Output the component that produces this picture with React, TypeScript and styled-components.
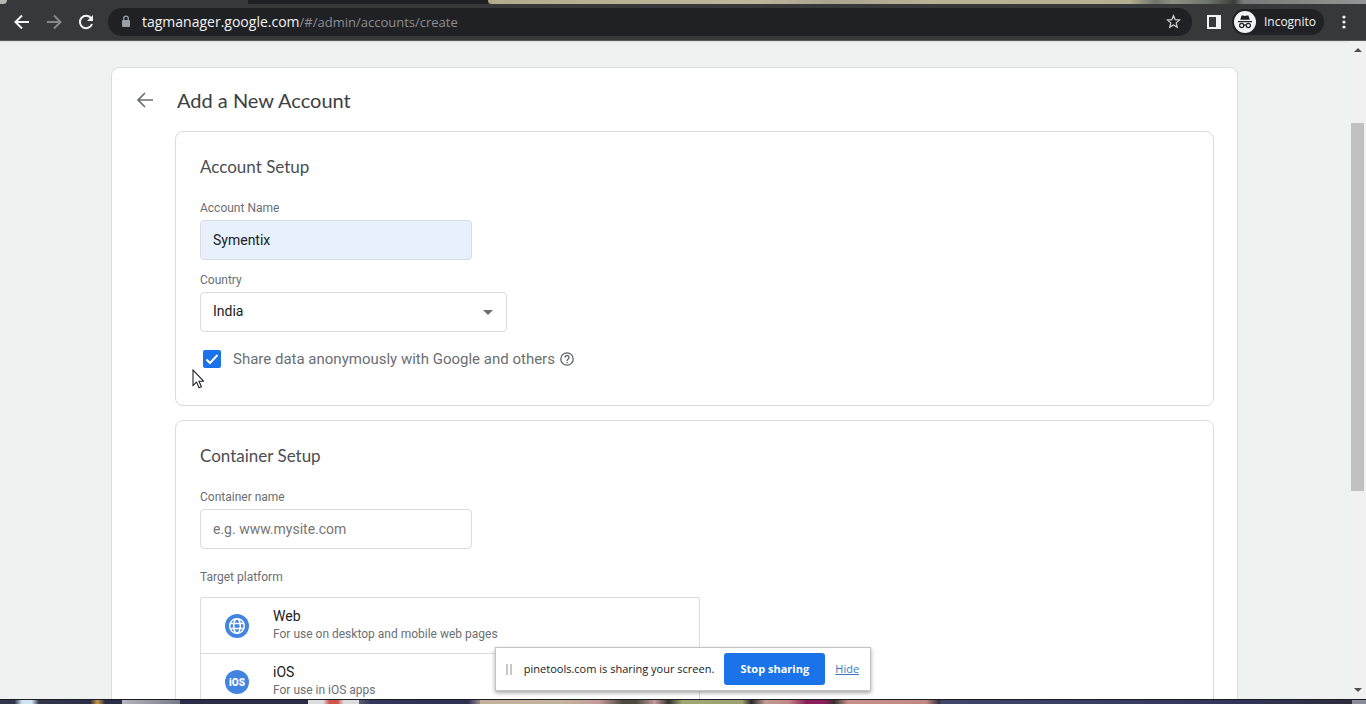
import React from "react";
import styled, { createGlobalStyle } from "styled-components";

const Global = createGlobalStyle`
  *, *::before, *::after { box-sizing: border-box; }
  body { margin: 0; font-family: Roboto, sans-serif; color: #202124; overflow: hidden; }
  button, input, select { font: inherit; color: inherit; margin: 0; }
  svg { display: block; flex: none; }
`;

const Screen = styled.div`
  display: flex;
  flex-direction: column;
  height: 100vh;
  position: relative;
  overflow: hidden;
`;

const TabStrip = styled.div`
  flex: none;
  height: 4px;
  display: flex;
  background: #37383a;
`;

const StripPiece = styled.div<{ $grow: number; $bg: string; $radius?: string }>`
  flex: ${(p) => p.$grow} 0 0;
  background: ${(p) => p.$bg};
  border-radius: ${(p) => p.$radius ?? "0"};
`;

const Toolbar = styled.header`
  flex: none;
  display: flex;
  align-items: center;
  height: 37px;
  padding: 0 10px 1px 8px;
  background: #37383a;
  border-bottom: 1px solid #58595b;
  color: #f1f3f4;
`;

const ToolButton = styled.button<{ $dim?: boolean }>`
  display: flex;
  align-items: center;
  justify-content: center;
  flex: none;
  width: 28px;
  height: 28px;
  padding: 0;
  border: 0;
  background: none;
  color: ${(p) => (p.$dim ? "#85878a" : "#f1f3f4")};
`;

const SidePanelButton = styled(ToolButton)`
  width: 40px;
  padding-left: 4px;
`;

const MenuButton = styled(ToolButton)`
  width: 24px;
`;

const NavButtons = styled.nav`
  display: flex;
  gap: 4px;
  margin-right: 8px;
`;

const AddressBar = styled.div`
  flex: 1;
  display: flex;
  align-items: center;
  height: 28px;
  padding: 0 4px 0 12px;
  border-radius: 14px;
  background: #202124;
  font: 13px/20px "Open Sans", "Noto Sans", sans-serif;
`;

const Url = styled.span`
  flex: 1;
  margin-left: 10px;
  color: #8b8e91;
  b { font-weight: 400; font-size: 14px; color: #f1f3f4; }
`;

const Incognito = styled.button`
  display: flex;
  align-items: center;
  gap: 8px;
  height: 26px;
  margin-right: 8px;
  padding: 0 8px 0 2px;
  border: 0;
  border-radius: 13px;
  background: #202124;
  color: #f1f3f4;
  font: 12px/16px "Open Sans", "Noto Sans", sans-serif;
`;

const Body = styled.div`
  flex: 1;
  min-height: 0;
  display: flex;
  background: #f0f2f1;
`;

const Page = styled.main`
  flex: 1;
  min-width: 0;
  overflow: hidden;
  padding: 26px 111px 0;
  box-shadow: inset 0 3px 3px -2px #dcdfde;
`;

const Card = styled.section`
  padding: 0 23px 24px;
  border: 1px solid #dadde0;
  border-radius: 8px;
  background: #fff;
`;

const CardHead = styled.div`
  display: flex;
  align-items: center;
  gap: 22px;
  height: 63px;
`;

const BackButton = styled(ToolButton)`
  width: 20px;
  color: #6b6f73;
`;

const Title = styled.h1`
  margin: 0;
  font: 400 20px/28px "Lato", sans-serif;
  color: #3c4043;
`;

const Panel = styled.section`
  margin: 0 0 14px 40px;
  padding: 24px 24px 29px;
  border: 1px solid #dadde0;
  border-radius: 8px;
`;

const PanelTitle = styled.h2`
  margin: 0 0 20px;
  font: 400 17px/22px "Lato", sans-serif;
  color: #4a4e52;
`;

const Field = styled.div`
  display: flex;
  flex-direction: column;
  align-items: flex-start;
  margin-bottom: 10px;
`;

const Label = styled.label`
  margin-bottom: 2px;
  font-size: 12px;
  line-height: 20px;
  color: #6b6f73;
`;

const GroupLabel = styled.div`
  margin: 18px 0 10px;
  font-size: 12px;
  line-height: 20px;
  color: #6b6f73;
`;

const TextInput = styled.input<{ $filled?: boolean }>`
  width: 272px;
  height: 40px;
  padding: 0 12px;
  border: 1px solid #dadce0;
  border-radius: 4px;
  background: ${(p) => (p.$filled ? "#e7f0fd" : "#fff")};
  font-size: 14px;
  outline: 0;
  &::placeholder { color: #757575; opacity: 1; }
`;

const SelectBox = styled.div`
  display: grid;
  width: 307px;
  align-items: center;
  > * { grid-area: 1 / 1; }
  > svg { justify-self: end; margin-right: 14px; pointer-events: none; }
`;

const Select = styled.select`
  appearance: none;
  width: 100%;
  height: 40px;
  padding: 0 12px 2px;
  border: 1px solid #dadce0;
  border-radius: 4px;
  background: #fff;
  font-size: 14px;
`;

const CheckRow = styled.div`
  display: flex;
  align-items: center;
  height: 34px;
  padding-left: 3px;
`;

const CheckLabel = styled.label`
  display: flex;
  align-items: center;
  gap: 12px;
  margin-right: 4px;
  font-size: 15px;
  line-height: 20px;
  color: #6b6f73;
`;

const CheckBox = styled.span`
  display: grid;
  place-items: center;
  > * { grid-area: 1 / 1; }
  > svg { pointer-events: none; }
`;

const CheckInput = styled.input`
  appearance: none;
  width: 18px;
  height: 18px;
  border-radius: 2px;
  border: 2px solid #5f6368;
  &:checked { background: #1a73e8; border-color: #1a73e8; }
`;

const HelpButton = styled(ToolButton)`
  width: 16px;
  height: 20px;
  color: #5f6368;
`;

const Platforms = styled.ul`
  max-width: 500px;
  margin: 0;
  padding: 0;
  list-style: none;
  border: 1px solid #dadce0;
  border-radius: 2px;
`;

const PlatformItem = styled.li`
  & + & { border-top: 1px solid #dadce0; }
`;

const PlatformButton = styled.button`
  display: flex;
  align-items: center;
  gap: 24px;
  width: 100%;
  height: 55px;
  padding: 0 24px;
  border: 0;
  background: none;
  text-align: left;
`;

const PlatformText = styled.span`
  display: flex;
  flex-direction: column;
  padding-bottom: 4px;
  font-size: 12px;
  line-height: 16px;
  color: #6b6f73;
  b { font-weight: 400; font-size: 14px; line-height: 20px; color: #202124; }
`;

const Scrollbar = styled.div`
  flex: none;
  width: 17px;
  padding: 5px 2px;
  display: flex;
  flex-direction: column;
  align-items: center;
  background: #f1f1f1;
`;

const Gap = styled.div<{ $grow: number }>`
  flex: ${(p) => p.$grow} 0 0;
`;

const Thumb = styled(Gap)`
  width: 100%;
  background: #c1c1c1;
`;

const Taskbar = styled.footer`
  flex: none;
  display: flex;
  height: 5px;
  border-top: 1px solid #1c1c24;
  background: #34364e;
`;

const ShareLayer = styled.div`
  position: absolute;
  inset: auto 0 13px;
  display: flex;
  justify-content: center;
  pointer-events: none;
`;

const ShareBar = styled.aside`
  display: flex;
  align-items: center;
  gap: 10px;
  height: 44px;
  padding: 0 11px 0 10px;
  border: 1px solid #c4c4c4;
  background: #fff;
  box-shadow: 0 2px 4px rgba(0, 0, 0, 0.35);
  font: 11px/16px "Open Sans", "Noto Sans", sans-serif;
  pointer-events: auto;
`;

const Grip = styled.span`
  width: 6px;
  height: 11px;
  margin-right: 2px;
  border: solid #c6c6c6;
  border-width: 0 2px;
`;

const StopButton = styled.button`
  width: 101px;
  height: 32px;
  padding: 0;
  border: 0;
  border-radius: 3px;
  background: #1a73e8;
  color: #fff;
  font-weight: 700;
`;

const HideLink = styled.a`
  color: #3c78c0;
`;

const Pointer = styled.svg`
  position: absolute;
  left: 192px;
  top: 369px;
`;

const Arrow = ({ flip = false }: { flip?: boolean }) => (
  <svg width="16" height="16" viewBox="0 0 16 16" fill="none" stroke="currentColor" strokeWidth="2">
    <path d={flip ? "M1 8h13M8 1.5 14.5 8 8 14.5" : "M15 8H2M8 1.5 1.5 8 8 14.5"} />
  </svg>
);

export default function App() {
  return (
    <>
      <Global />
      <Screen>
        <TabStrip>
          <StripPiece $grow={7} $bg="#b5b6b4" $radius="0 0 6px 0" />
          <StripPiece $grow={241} $bg="#37383a" />
          <StripPiece $grow={240} $bg="#202124" />
          <StripPiece $grow={878} $bg="linear-gradient(90deg,#b3ad8c,#bdb79a 30%,#a9a58f 39%,#b9b394 50%,#b5b08f 73%,#6f746c 76%,#8e9082 78%,#6f746f 82%,#3c3c38 85%,#777a78 86%,#949594)" $radius="0 0 0 5px" />
        </TabStrip>
        <Toolbar>
          <NavButtons aria-label="History">
            <ToolButton aria-label="Back"><Arrow /></ToolButton>
            <ToolButton aria-label="Forward" $dim><Arrow flip /></ToolButton>
            <ToolButton aria-label="Reload">
              <svg width="16" height="16" viewBox="0 0 16 16" fill="none" stroke="currentColor" strokeWidth="2">
                <path d="M13.2 4.4A6.2 6.2 0 1 0 14 10" />
                <path d="M15 1v6H9z" fill="currentColor" stroke="none" />
              </svg>
            </ToolButton>
          </NavButtons>
          <AddressBar>
            <svg width="12" height="14" viewBox="0 0 12 14" fill="none">
              <rect x="2" y="5" width="8" height="7" rx="1" fill="#9aa0a6" />
              <path d="M3.7 5V3.4a2.3 2.3 0 0 1 4.6 0V5" stroke="#9aa0a6" strokeWidth="1.3" />
            </svg>
            <Url><b>tagmanager.google.com</b>/#/admin/accounts/create</Url>
            <ToolButton aria-label="Bookmark this page">
              <svg width="15" height="15" viewBox="0 0 16 16" fill="none" stroke="#d0d3d6" strokeWidth="1.3">
                <path d="m8 1.8 1.8 4.3 4.6.4-3.5 3 1.1 4.5L8 11.6 4 14l1.1-4.5-3.5-3 4.6-.4z" />
              </svg>
            </ToolButton>
          </AddressBar>
          <SidePanelButton aria-label="Side panel">
            <svg width="14" height="14" viewBox="0 0 14 14">
              <path fill="currentColor" fillRule="evenodd" d="M0 0h14v14H0zM2 2v10h7V2z" />
            </svg>
          </SidePanelButton>
          <Incognito>
            <svg width="22" height="22" viewBox="0 0 22 22">
              <circle cx="11" cy="11" r="11" fill="#f1f3f4" />
              <path fill="#202124" d="M7.6 4.5h1.7L11 5l1.7-.5h1.7l1.4 4.2H6.2zM4 10h14v1.2H4z" />
              <g fill="none" stroke="#202124" strokeWidth="1.2">
                <circle cx="7.7" cy="14.5" r="2.1" />
                <circle cx="14.3" cy="14.5" r="2.1" />
                <path d="M9.8 14.2q1.2-.7 2.4 0" />
              </g>
            </svg>
            Incognito
          </Incognito>
          <MenuButton aria-label="Menu">
            <svg width="4" height="14" viewBox="0 0 4 14" fill="currentColor">
              <circle cx="2" cy="2" r="1.6" /><circle cx="2" cy="7" r="1.6" /><circle cx="2" cy="12" r="1.6" />
            </svg>
          </MenuButton>
        </Toolbar>

        <Body>
          <Page>
            <Card>
              <CardHead>
                <BackButton aria-label="Go back">
                  <svg width="18" height="16" viewBox="0 0 18 16" fill="none" stroke="currentColor" strokeWidth="1.7">
                    <path d="M17 8H2.5M9 1 2 8l7 7" />
                  </svg>
                </BackButton>
                <Title>Add a New Account</Title>
              </CardHead>

              <Panel>
                <PanelTitle>Account Setup</PanelTitle>
                <Field>
                  <Label htmlFor="account">Account Name</Label>
                  <TextInput id="account" $filled defaultValue="Symentix" />
                </Field>
                <Field>
                  <Label htmlFor="country">Country</Label>
                  <SelectBox>
                    <Select id="country" defaultValue="India"><option>India</option></Select>
                    <svg width="10" height="5" viewBox="0 0 10 5"><path d="M0 0h10L5 5z" fill="#6b6f73" /></svg>
                  </SelectBox>
                </Field>
                <CheckRow>
                  <CheckLabel>
                    <CheckBox>
                      <CheckInput type="checkbox" defaultChecked />
                      <svg width="18" height="18" viewBox="0 0 18 18" fill="none" stroke="#fff" strokeWidth="2">
                        <path d="m3.5 9.5 3.5 3.5 7.5-8" />
                      </svg>
                    </CheckBox>
                    Share data anonymously with Google and others
                  </CheckLabel>
                  <HelpButton aria-label="Help">
                    <svg width="14" height="14" viewBox="0 0 14 14" fill="none" stroke="currentColor" strokeWidth="1.3">
                      <circle cx="7" cy="7" r="6.2" />
                      <path d="M5 5.6a2 2 0 1 1 3.2 1.5C7.4 7.700 7 8 7 8.900M7 9.900v1.300" />
                    </svg>
                  </HelpButton>
                </CheckRow>
              </Panel>

              <Panel>
                <PanelTitle>Container Setup</PanelTitle>
                <Field>
                  <Label htmlFor="container">Container name</Label>
                  <TextInput id="container" placeholder="e.g. www.mysite.com" />
                </Field>
                <GroupLabel>Target platform</GroupLabel>
                <Platforms>
                  <PlatformItem>
                    <PlatformButton>
                      <svg width="24" height="24" viewBox="0 0 24 24">
                        <circle cx="12" cy="12" r="12" fill="#4285e0" />
                        <g fill="none" stroke="#fff" strokeWidth="1.5">
                          <circle cx="12" cy="12" r="7.3" />
                          <ellipse cx="12" cy="12" rx="3.3" ry="7.3" />
                          <path d="M5.2 9.5h13.6M5.2 14.5h13.6" />
                        </g>
                      </svg>
                      <PlatformText><b>Web</b>For use on desktop and mobile web pages</PlatformText>
                    </PlatformButton>
                  </PlatformItem>
                  <PlatformItem>
                    <PlatformButton>
                      <svg width="24" height="24" viewBox="0 0 24 24">
                        <circle cx="12" cy="12" r="12" fill="#4285e0" />
                        <text x="12" y="16" textAnchor="middle" fontFamily="Roboto, sans-serif" fontSize="10" fontWeight="900" fill="#fff">iOS</text>
                      </svg>
                      <PlatformText><b>iOS</b>For use in iOS apps</PlatformText>
                    </PlatformButton>
                  </PlatformItem>
                </Platforms>
              </Panel>
            </Card>
          </Page>
          <Scrollbar aria-hidden="true">
            <svg width="8" height="8" viewBox="0 0 8 8"><path d="M0 6h8L4 2z" fill="#505050" /></svg>
            <Gap $grow={69} />
            <Thumb $grow={368} />
            <Gap $grow={195} />
            <svg width="8" height="8" viewBox="0 0 8 8"><path d="M0 2h8L4 6z" fill="#505050" /></svg>
          </Scrollbar>
        </Body>

        <Taskbar>
          <StripPiece $grow={122} $bg="linear-gradient(90deg,#34364e 12%,#cfe6f2 18%,#cfe6f2 26%,#34364e 32%,#2c2e48 74%,#c79a40 80%,#2c2e48 86%)" />
          <StripPiece $grow={58} $bg="linear-gradient(90deg,#b5b6bb,#77798a)" />
          <StripPiece $grow={128} $bg="#2c2c48" />
          <StripPiece $grow={51} $bg="linear-gradient(90deg,#dcdcde 30%,#cf5347 42%,#cf5347 58%,#dcdcde 70%)" />
          <StripPiece $grow={121} $bg="linear-gradient(90deg,#5c5e6c,#34365a 10%,#2e3050 90%,#9a8a86)" />
          <StripPiece $grow={460} $bg="linear-gradient(90deg,#c3b09a,#c2b49a 18%,#c39a98 26%,#4a4a3e 31%,#4a4a3e 34%,#c39a98 38%,#35332f 41%,#a3a674 44%,#9ca070 57%,#2a2a28 59%,#c09a90 62%,#c08a88 67%,#8a1e58 71%,#8a1e58 75%,#35332f 77%,#c88f88 80%,#c08880 97%,#2c2c38)" />
          <StripPiece $grow={412} $bg="linear-gradient(90deg,#40466a,#33365a 70%,#2c2c3c)" />
          <StripPiece $grow={14} $bg="#8a8c98" />
        </Taskbar>

        <ShareLayer>
          <ShareBar>
            <Grip />
            pinetools.com is sharing your screen.
            <StopButton>Stop sharing</StopButton>
            <HideLink href="#hide">Hide</HideLink>
          </ShareBar>
        </ShareLayer>

        <Pointer width="12" height="20" viewBox="0 0 12 20" aria-hidden="true">
          <path d="M1 1v15.5l3.6-3.4 2.4 5.6 2.4-1-2.4-5.500h4.600z" fill="#fff" stroke="#20242c" strokeWidth="1.1" />
        </Pointer>
      </Screen>
    </>
  );
}
